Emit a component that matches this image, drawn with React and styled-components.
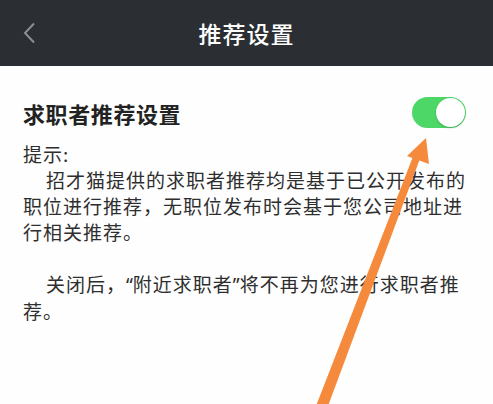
import React from "react";
import styled, { createGlobalStyle } from "styled-components";

const GlobalStyle = createGlobalStyle`
    html, body {
        margin: 0;
        padding: 0;
        background: #ffffff;
    }

    body {
        font-family: "Noto Sans CJK SC", "Noto Sans", sans-serif;
    }
`;

const Page = styled.main`
    position: relative;
    width: 493px;
    height: 404px;
    overflow: hidden;
    background: #fefefe;
`;

const TopBar = styled.header`
    display: grid;
    grid-template-columns: 60px 1fr 60px;
    align-items: center;
    height: 66px;
    background: #2b2f34;
`;

const BackButton = styled.button`
    display: flex;
    align-items: center;
    justify-content: flex-start;
    padding: 0 0 0 22px;
    height: 100%;
    border: 0;
    background: transparent;
`;

const Title = styled.h1`
    margin: 0;
    text-align: center;
    font-size: 23px;
    font-weight: 500;
    letter-spacing: 1px;
    color: #ffffff;
`;

const Content = styled.section`
    padding: 0 26px 0 23px;
`;

const SettingRow = styled.div`
    display: flex;
    align-items: center;
    justify-content: space-between;
    margin-top: 31px;
    height: 31px;
`;

const SettingLabel = styled.h2`
    margin: 0;
    font-size: 22px;
    font-weight: 700;
    letter-spacing: 0.6px;
    color: #222222;
`;

const Toggle = styled.span`
    position: relative;
    display: block;
    width: 54px;
    height: 31px;
    margin-right: 1px;
    border-radius: 16px;
    background: ${({ $on }) => ($on ? "#4cd766" : "#e5e5e5")};

    &::after {
        content: '';
        position: absolute;
        top: 1px;
        left: ${({ $on }) => ($on ? "24px" : "1px")};
        width: 29px;
        height: 29px;
        border-radius: 50%;
        background: #ffffff;
        box-shadow: 0 1px 2px rgba(0, 0, 0, 0.2);
    }
`;

const Notice = styled.div`
    margin-top: 13px;
    font-size: 19px;
    line-height: 26px;
    letter-spacing: 1px;
    color: #2e2e2e;
`;

const Paragraph = styled.p`
    margin: 0 0 ${({ $gap }) => ($gap ? "26px" : "0")};
    text-indent: 23px;
`;

// narrow western-style quotes, as on the device
const Quote = styled.span`
    font-family: "Noto Sans", sans-serif;
    letter-spacing: 0;
`;

const Label = styled.div``;

const Arrow = styled.svg`
    position: absolute;
    left: 0;
    top: 0;
    pointer-events: none;
`;

export default function App() {
    return (
        <Page>
            <GlobalStyle />
            <TopBar>
                <BackButton aria-label="返回">
                    <svg width="14" height="22" viewBox="0 0 14 22">
                        <path d="M12 1.5 L3 11 L12 20.5" fill="none" stroke="#8b8e92" strokeWidth="2" />
                    </svg>
                </BackButton>
                <Title>推荐设置</Title>
                <span />
            </TopBar>

            <Content>
                <SettingRow>
                    <SettingLabel>求职者推荐设置</SettingLabel>
                    <Toggle $on />
                </SettingRow>

                <Notice>
                    <Label>提示:</Label>
                    <Paragraph $gap>
                        招才猫提供的求职者推荐均是基于已公开发布的职位进行推荐，无职位发布时会基于您公司地址进行相关推荐。
                    </Paragraph>
                    <Paragraph>
                        关闭后，<Quote>“</Quote>附近求职者<Quote>”</Quote>将不再为您进行求职者推荐。
                    </Paragraph>
                </Notice>
            </Content>

            <Arrow width="493" height="404" viewBox="0 0 493 404">
                <polygon points="316,406 328,406 421,156 414,154" fill="#f58a3c" />
                <polygon points="426,138 407,156 429,164" fill="#f58a3c" />
            </Arrow>
        </Page>
    );
}
